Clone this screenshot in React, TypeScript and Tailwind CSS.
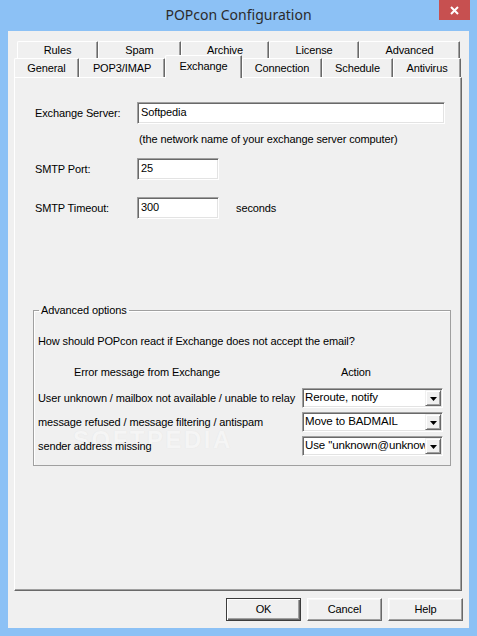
import React from "react";

const sunken =
  "border border-t-[#a0a0a0] border-l-[#a0a0a0] border-b-white border-r-white shadow-[inset_1px_1px_0_#696969,inset_-1px_-1px_0_#e3e3e3] bg-white";

function Tab({ label, className }: { label: string; className: string }) {
  return (
    <div
      className={
        "h-[17px] flex items-center justify-center border-t border-l border-r border-t-white border-l-white border-r-[#696969] shadow-[inset_-1px_0_0_#a0a0a0] rounded-tl-[2px] rounded-tr-[1px] bg-[#f0f0f0] text-[11px] leading-[13px] text-black shrink-0 " +
        className
      }
    >
      {label}
    </div>
  );
}

function Select({ value }: { value: string }) {
  return (
    <div className={"w-[141px] h-[20px] flex items-stretch " + sunken}>
      <span className="flex-1 pl-[2px] pt-[2px] text-[11.5px] leading-[13px] whitespace-nowrap overflow-hidden text-black">
        {value}
      </span>
      <span className="w-[16px] my-[1px] mr-[1px] bg-[#f0f0f0] border border-t-[#f0f0f0] border-l-[#f0f0f0] border-b-[#696969] border-r-[#696969] shadow-[inset_1px_1px_0_#ffffff,inset_-1px_-1px_0_#a0a0a0] flex items-center justify-center">
        <svg width="7" height="4" viewBox="0 0 7 4" className="mt-[2px]">
          <path d="M0 0H7L3.5 4Z" fill="#000" />
        </svg>
      </span>
    </div>
  );
}

function Button({ label, def }: { label: string; def?: boolean }) {
  return (
    <div
      className={
        "w-[75px] h-[23px] flex items-center justify-center text-[11px] leading-[13px] text-black bg-[#f0f0f0] border " +
        (def
          ? "border-[#3c3c3c] shadow-[inset_1px_1px_0_#ffffff,inset_-1px_-1px_0_#696969,inset_-2px_-2px_0_#a0a0a0]"
          : "border-t-white border-l-white border-b-[#696969] border-r-[#696969] shadow-[inset_-1px_-1px_0_#a0a0a0,inset_1px_1px_0_#f8f8f8]")
      }
    >
      {label}
    </div>
  );
}

export default function App() {
  return (
    <div className="w-[477px] h-[636px] bg-[#8cc1f5] flex flex-col font-['Liberation_Sans',Arial,sans-serif] tracking-[-0.12px] overflow-hidden">
      {/* Title bar */}
      <div className="relative h-[31px] shrink-0 flex items-center justify-center">
        <span className="font-['Noto_Sans',sans-serif] text-[14px] leading-[18px] text-[#2b2b2b] tracking-normal -mt-[1px]">
          POPcon Configuration
        </span>
        <div className="absolute top-0 right-[7px] w-[31px] h-[20px] bg-[#c75050] flex items-center justify-center">
          <svg width="9" height="9" viewBox="0 0 9 9">
            <path d="M1 1L8 8M8 1L1 8" stroke="#ffffff" strokeWidth="2" />
          </svg>
        </div>
      </div>

      {/* Client area */}
      <div className="mx-[8px] mb-[8px] flex-1 bg-[#f0f0f0] pt-[10px] pl-[6px] pr-[6px] flex flex-col">
        {/* Tab rows */}
        <div className="flex ml-[3px]">
          <Tab label="Rules" className="w-[81px]" />
          <Tab label="Spam" className="w-[83px]" />
          <Tab label="Archive" className="w-[88px]" />
          <Tab label="License" className="w-[90px]" />
          <Tab label="Advanced" className="w-[101px]" />
        </div>
        <div className="relative z-10 flex items-end h-[22px] -mt-[3px]">
          <Tab label="General" className="w-[65px] !h-[19px] pt-[1px]" />
          <Tab label="POP3/IMAP" className="w-[86px] !h-[19px] pt-[1px]" />
          <div className="relative z-10 w-[77px] h-[23px] -mb-[1px] shrink-0 bg-[#f0f0f0] border-t border-l border-r border-t-white border-l-white border-r-[#696969] shadow-[inset_-1px_0_0_#a0a0a0] rounded-tl-[2px] rounded-tr-[1px] flex justify-center pt-[4px] text-[11px] leading-[13px] text-black">
            Exchange
          </div>
          <Tab label="Connection" className="w-[80px] !h-[19px] pt-[1px]" />
          <Tab label="Schedule" className="w-[71px] !h-[19px] pt-[1px]" />
          <Tab label="Antivirus" className="w-[68px] !h-[19px] pt-[1px]" />
        </div>

        {/* Tab panel */}
        <div className="w-[448px] h-[514px] shrink-0 border border-t-white border-l-white border-r-[#696969] border-b-[#696969] shadow-[inset_-1px_-1px_0_#a0a0a0] pt-[24px] pl-[18px] text-[11px] leading-[13px] text-black">
          <div className="flex items-center ml-[2px]">
            <span className="w-[102px]">Exchange Server:</span>
            <div className={"w-[308px] h-[22px] pl-[3px] pt-[3px] " + sunken}>Softpedia</div>
          </div>
          <div className="mt-[9px] ml-[106px]">(the network name of your exchange server computer)</div>
          <div className="flex items-center ml-[2px] mt-[12px]">
            <span className="w-[102px]">SMTP Port:</span>
            <div className={"w-[82px] h-[22px] pl-[3px] pt-[3px] " + sunken}>25</div>
          </div>
          <div className="flex items-center ml-[2px] mt-[17px]">
            <span className="w-[102px]">SMTP Timeout:</span>
            <div className={"w-[82px] h-[22px] pl-[3px] pt-[3px] " + sunken}>300</div>
            <span className="ml-[17px]">seconds</span>
          </div>

          <fieldset className="relative mt-[85px] w-[418px] border border-[#a0a0a0] shadow-[inset_1px_1px_0_#ffffff] pl-[4px] pb-[9px]">
            <legend className="ml-[1px] px-[2px]">Advanced options</legend>
            <span
              aria-hidden="true"
              className="absolute left-[39px] top-[110px] text-[24px] leading-[26px] font-bold tracking-[2.5px] text-[#f5f5f5] [text-shadow:0_0_1px_#e2e2e2] select-none pointer-events-none"
            >
              SOFTPEDIA<sup className="text-[9px] align-top">®</sup>
            </span>
            <div className="relative mt-[18px]">How should POPcon react if Exchange does not accept the email?</div>
            <div className="relative flex mt-[18px]">
              <span className="w-[303px] pl-[36px]">Error message from Exchange</span>
              <span>Action</span>
            </div>
            <div className="relative flex items-center mt-[9px]">
              <span className="w-[264px] whitespace-nowrap pt-[1px]">User unknown / mailbox not available / unable to relay</span>
              <Select value="Reroute, notify" />
            </div>
            <div className="relative flex items-center mt-[4px]">
              <span className="w-[264px] whitespace-nowrap pt-[1px]">message refused / message filtering / antispam</span>
              <Select value="Move to BADMAIL" />
            </div>
            <div className="relative flex items-center mt-[4px]">
              <span className="w-[264px] whitespace-nowrap pt-[1px]">sender address missing</span>
              <Select value={'Use "unknown@unknown.com"'} />
            </div>
          </fieldset>
        </div>

        {/* Buttons */}
        <div className="flex justify-end gap-[6px] mt-[7px]">
          <Button label="OK" def />
          <Button label="Cancel" />
          <Button label="Help" />
        </div>
      </div>
    </div>
  );
}
